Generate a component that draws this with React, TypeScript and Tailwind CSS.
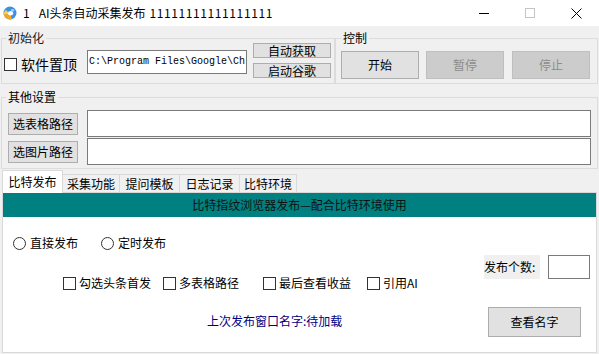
import React from 'react'
import clsx from 'clsx'

type LabelProps = {
  label: string
  className?: string
}

const CheckItem = ({ label, className }: LabelProps) => (
  <div className={clsx('flex items-center', className)}>
    <span className="size-[13px] shrink-0 border border-[#333333] bg-white" />
    <span className="ml-[3px] whitespace-nowrap">{label}</span>
  </div>
)

const RadioItem = ({ label, className }: LabelProps) => (
  <div className={clsx('flex items-center', className)}>
    <span className="size-[13px] shrink-0 rounded-full border border-[#333333] bg-white" />
    <span className="ml-[4px] whitespace-nowrap">{label}</span>
  </div>
)

const Logo = () => (
  <svg width="14" height="14" viewBox="0 0 14 14" className="ml-[3px] shrink-0">
    <circle cx="7" cy="7" r="6.5" fill="#3b8fe6" />
    <path d="M0.6 8 A6.5 6.5 0 0 0 9 13.2 L7.5 8.5 Z" fill="#f5a623" />
    <path d="M0.6 8 L7.5 8.5 L3 4 A6.5 6.5 0 0 0 0.6 8 Z" fill="#fbd04a" />
    <ellipse cx="7.6" cy="7.2" rx="2.6" ry="2.2" fill="#ffffff" />
    <ellipse cx="9.6" cy="4.2" rx="1.6" ry="1.2" fill="#9fd1ff" />
  </svg>
)

const WinButton = ({ label, className }: LabelProps) => (
  <button
    className={clsx(
      'flex items-center justify-center border border-[#adadad] bg-[#e1e1e1] whitespace-nowrap',
      className,
    )}
  >
    {label}
  </button>
)

const App = () => {
  const tabs = [
    { name: '采集功能', w: 'w-[57px]' },
    { name: '提问模板', w: 'w-[60px]' },
    { name: '日志记录', w: 'w-[60px]' },
    { name: '比特环境', w: 'w-[57px]' },
  ]

  return (
    <div className="h-[354px] w-[599px] overflow-hidden bg-[#f0f0f0] font-['Microsoft_YaHei','Noto_Sans_CJK_SC',sans-serif] text-[12px] leading-[14px] text-black">
      {/* NOTE - title bar */}
      <div className="flex h-[26px] items-center bg-white">
        <Logo />
        <span className="ml-[6px]">1</span>
        <span className="ml-[9px]">AI头条自动采集发布</span>
        <span className="ml-[4px] tracking-[0.6px]">11111111111111111</span>
        <div className="ml-auto flex h-full">
          <div className="flex w-[46px] items-center justify-center">
            <span className="h-px w-[10px] bg-black" />
          </div>
          <div className="flex w-[46px] items-center justify-center">
            <span className="size-[10px] border border-[#c4c4c4]" />
          </div>
          <div className="flex w-[46px] items-center justify-center">
            <svg width="11" height="11" viewBox="0 0 11 11">
              <path d="M0.5 0.5 L10.5 10.5 M10.5 0.5 L0.5 10.5" stroke="#000" strokeWidth="1" />
            </svg>
          </div>
        </div>
      </div>

      {/* NOTE - init + control groups */}
      <div className="flex items-start">
        <fieldset className="ml-[1px] mt-[5px] h-[53px] w-[334px] border border-[#dcdcdc]">
          <legend className="ml-[4px] px-[2px] leading-[14px] text-[#1a1a1a]">初始化</legend>
          <div className="flex items-start">
            <div className="ml-[2px] mt-[11px] flex w-[83px] items-center">
              <span className="size-[13px] shrink-0 border border-[#333333] bg-white" />
              <span className="ml-[4px] text-[14px] leading-[16px]">软件置顶</span>
            </div>
            <div className="mt-[5px] flex h-[24px] w-[160px] items-center overflow-hidden border border-[#7a7a7a] bg-white pl-[1px] font-['Liberation_Mono',monospace] text-[10px] whitespace-nowrap">
              C:\Program Files\Google\Ch
            </div>
            <div className="-mt-[2px] ml-[6px] flex flex-col gap-[5px]">
              <WinButton label="自动获取" className="h-[15px] w-[78px]" />
              <WinButton label="启动谷歌" className="h-[15px] w-[78px]" />
            </div>
          </div>
        </fieldset>

        <fieldset className="mt-[5px] h-[53px] w-[263px] border border-[#dcdcdc]">
          <legend className="ml-[5px] px-[2px] leading-[14px]">控制</legend>
          <div className="mt-[6px] flex">
            <WinButton label="开始" className="ml-[5px] h-[28px] w-[78px]" />
            <button className="ml-[7px] h-[28px] w-[78px] border border-[#bfbfbf] bg-[#cccccc] text-[#8c8c8c]">暂停</button>
            <button className="ml-[8px] h-[28px] w-[78px] border border-[#bfbfbf] bg-[#cccccc] text-[#8c8c8c]">停止</button>
          </div>
        </fieldset>
      </div>

      {/* NOTE - other settings */}
      <fieldset className="ml-[1px] mt-[6px] h-[79px] w-[597px] border border-[#dcdcdc]">
        <legend className="ml-[4px] px-[2px] leading-[14px]">其他设置</legend>
        <div className="mt-[6px] flex h-[27px] items-center">
          <WinButton label="选表格路径" className="ml-[6px] h-[22px] w-[70px]" />
          <div className="ml-[9px] h-[27px] w-[504px] border border-[#7a7a7a] bg-white" />
        </div>
        <div className="mt-[1px] flex h-[27px] items-center">
          <WinButton label="选图片路径" className="ml-[6px] h-[22px] w-[70px]" />
          <div className="ml-[9px] h-[27px] w-[504px] border border-[#7a7a7a] bg-white" />
        </div>
      </fieldset>

      {/* NOTE - tabs */}
      <div className="mt-[1px] flex h-[22px] items-end pl-[2px]">
        <div className="relative z-10 -mb-px flex h-[23px] w-[61px] items-center justify-center border border-b-0 border-[#d9d9d9] bg-white">
          比特发布
        </div>
        {tabs.map((tab) => (
          <div
            key={tab.name}
            className={clsx(
              'flex h-[18px] items-center justify-center border-r border-t border-[#d9d9d9] bg-[#f0f0f0]',
              tab.w,
            )}
          >
            {tab.name}
          </div>
        ))}
      </div>

      <div className="ml-[2px] h-[161px] w-[595px] border border-[#d9d9d9] bg-white">
        <div className="flex h-[24px] items-center justify-center bg-[#008080] text-[#111111]">
          比特指纹浏览器发布—配合比特环境使用
        </div>

        <div className="flex">
          <div className="flex-1">
            <div className="mt-[19px] flex">
              <RadioItem label="直接发布" className="ml-[10px] w-[88px]" />
              <RadioItem label="定时发布" />
            </div>
            <div className="mt-[26px] flex">
              <CheckItem label="勾选头条首发" className="ml-[60px] w-[100px]" />
              <CheckItem label="多表格路径" className="w-[100px]" />
              <CheckItem label="最后查看收益" className="w-[104px]" />
              <CheckItem label="引用AI" />
            </div>
            <div className="ml-[204px] mt-[24px] text-[#000080]">上次发布窗口名字:待加载</div>
          </div>

          <div className="mr-[6px] mt-[38px] w-[106px]">
            <div className="flex">
              <div className="flex h-[24px] w-[56px] items-center bg-[#f0f0f0]">发布个数:</div>
              <div className="ml-[8px] h-[24px] w-[42px] border border-[#7a7a7a] bg-white" />
            </div>
            <WinButton label="查看名字" className="ml-[4px] mt-[28px] h-[30px] w-[93px]" />
          </div>
        </div>
      </div>
    </div>
  )
}

export default App
